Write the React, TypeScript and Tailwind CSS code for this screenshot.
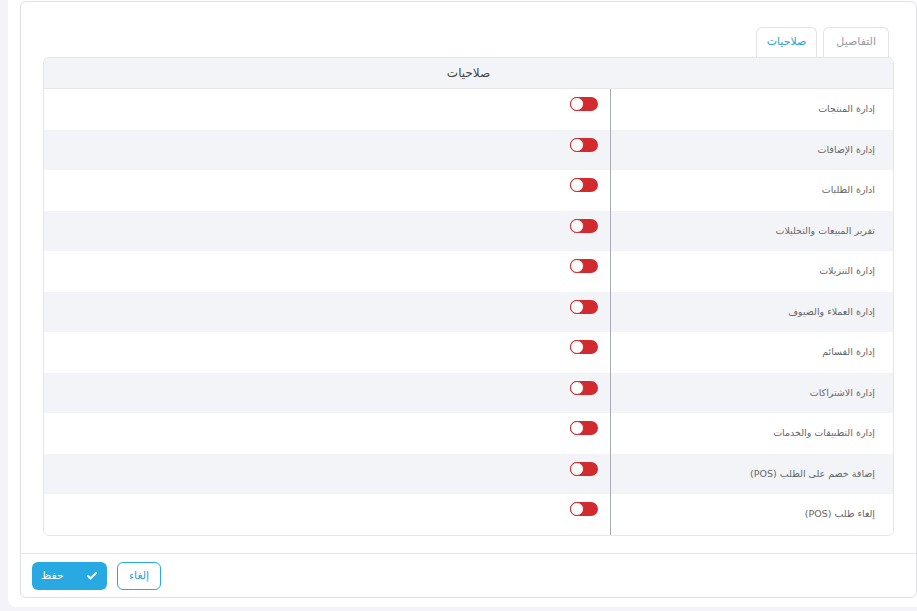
import { Check } from "lucide-react";

const permissions = [
  "إدارة المنتجات",
  "إدارة الإضافات",
  "ادارة الطلبات",
  "تقرير المبيعات والتحليلات",
  "إدارة التنزيلات",
  "إدارة العملاء والضيوف",
  "إدارة القسائم",
  "إدارة الاشتراكات",
  "إدارة التطبيقات والخدمات",
  "إضافة خصم على الطلب (POS)",
  "إلغاء طلب (POS)",
];

function Toggle() {
  return (
    <div className="relative w-[28px] h-[14px] rounded-full bg-[#d22b2f]">
      <div className="absolute left-0 top-0 w-[14px] h-[14px] rounded-full bg-white border-[1.5px] border-[#d22b2f]" />
    </div>
  );
}

export default function App() {
  return (
    <div
      className="w-[917px] h-[611px] overflow-hidden bg-[#f3f3f9] pl-2"
      style={{ fontFamily: '"DejaVu Sans", sans-serif' }}
    >
      <div className="h-[607px] bg-white rounded-bl-lg pl-3 pt-px">
        <div className="w-[897px] h-[597px] border border-[#dfdfe4] rounded-md flex flex-col" dir="rtl">
          <div className="px-[22px] pt-[25px]">
            <div className="flex gap-[6px] mr-[5px]">
              <div className="h-[30px] px-[12px] flex items-center border border-b-0 border-[#e3e3e8] rounded-t-md text-[11px] text-[#9a9aa2]">
                التفاصيل
              </div>
              <div className="h-[30px] px-[10px] flex items-center border border-b-0 border-[#e3e3e8] rounded-t-md text-[11px] text-[#2a9fd6] bg-white">
                صلاحيات
              </div>
            </div>
            <div className="border border-[#e5e5ea] rounded-md overflow-hidden">
              <div className="h-[31px] bg-[#f3f4f8] border-b border-[#e6e6ea] flex items-center justify-center text-[12px] text-[#444]">
                صلاحيات
              </div>
              {permissions.map((p, i) => (
                <div
                  key={p}
                  className={`h-[40.5px] flex ${i % 2 === 1 ? "bg-[#f3f4f8]" : "bg-white"}`}
                >
                  <div className="w-[282px] shrink-0 flex items-center pr-[18px] text-[9.5px] text-[#666]">
                    {p}
                  </div>
                  <div className="flex-1 border-r border-[#a8abb5] flex items-start pt-[8px] pr-[12px]">
                    <Toggle />
                  </div>
                </div>
              ))}
            </div>
          </div>
          <div className="mt-auto border-t border-[#e4e4ea] h-[44px] flex items-start pt-[8px] pl-[11px] gap-[10px]" dir="ltr">
            <button className="w-[75px] h-[28px] rounded-md bg-[#29a9e1] text-white flex items-center justify-center gap-[22px] text-[11px]">
              <span>حفظ</span>
              <Check className="w-[12px] h-[12px]" strokeWidth={4} />
            </button>
            <button className="w-[44px] h-[28px] rounded-md border border-[#29a9e1] text-[#2a9fd6] text-[11px] flex items-center justify-center">
              إلغاء
            </button>
          </div>
        </div>
      </div>
    </div>
  );
}
